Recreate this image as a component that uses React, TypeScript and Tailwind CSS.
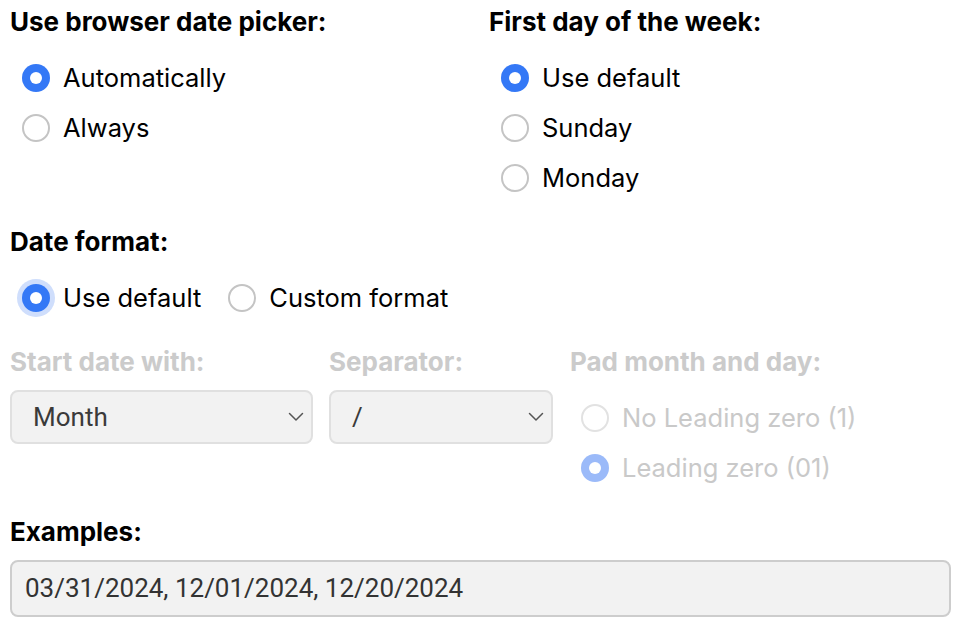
import { useState } from "react";

type RadioProps = {
  label: string;
  checked: boolean;
  disabled?: boolean;
  focused?: boolean;
  onChange?: () => void;
};

function Radio({ label, checked, disabled, focused, onChange }: RadioProps) {
  // kleurtjes zoals de macOS radio
  let circle = "border-2 border-[#c4c4c4] bg-white";
  if (checked && !disabled) circle = "bg-[#3478f6]";
  if (checked && disabled) circle = "bg-[#9bbaf9]";
  if (!checked && disabled) circle = "border-2 border-[#e2e2e2] bg-white";

  return (
    <label
      className={`flex h-[50px] items-center gap-[13px] ${disabled ? "text-[#c9c9c9]" : "text-black cursor-pointer"}`}
      onClick={() => !disabled && onChange?.()}
    >
      <span
        className={`flex h-[28px] w-[28px] shrink-0 items-center justify-center rounded-full ${circle} ${focused ? "ring-[5px] ring-[#cfdefc]" : ""}`}
      >
        {checked && <span className="h-[12px] w-[12px] rounded-full bg-white" />}
      </span>
      <span className="text-[25.5px] leading-none">{label}</span>
    </label>
  );
}

function Chevron() {
  return (
    <svg width="16" height="10" viewBox="0 0 16 10" fill="none" className="shrink-0">
      <path d="M1.5 1.5 L8 8 L14.5 1.5" stroke="#555" strokeWidth="1.5" strokeLinecap="round" strokeLinejoin="round" />
    </svg>
  );
}

function FakeSelect({ value, width }: { value: string; width: string }) {
  return (
    <div
      className={`${width} flex h-[54px] items-center justify-between rounded-[8px] border-2 border-[#e0e0e0] bg-[#f2f2f2] pl-[21px] pr-[7px] text-[26px] text-[#3a3a3a]`}
      style={{ fontFamily: "Roboto, sans-serif" }}
    >
      <span>{value}</span>
      <Chevron />
    </div>
  );
}

const heading = "h-[44px] text-[26px] font-bold leading-[44px]";

export default function App() {
  const [picker, setPicker] = useState("auto");
  const [firstDay, setFirstDay] = useState("default");
  const [fmt, setFmt] = useState("default");

  return (
    <div className="w-[962px] h-[629px] bg-white pl-[10px] pr-[11px] overflow-hidden" style={{ fontFamily: "Inter, 'Noto Sans', sans-serif" }}>
      <div className="flex">
        <div className="w-[479px]">
          <h2 className={`${heading} text-black`}>Use browser date picker:</h2>
          <div className="mt-[9px] pl-[12px]">
            <Radio label="Automatically" checked={picker === "auto"} onChange={() => setPicker("auto")} />
            <Radio label="Always" checked={picker === "always"} onChange={() => setPicker("always")} />
          </div>
        </div>
        <div>
          <h2 className={`${heading} text-black`}>First day of the week:</h2>
          <div className="mt-[9px] pl-[12px]">
            <Radio label="Use default" checked={firstDay === "default"} onChange={() => setFirstDay("default")} />
            <Radio label="Sunday" checked={firstDay === "sun"} onChange={() => setFirstDay("sun")} />
            <Radio label="Monday" checked={firstDay === "mon"} onChange={() => setFirstDay("mon")} />
          </div>
        </div>
      </div>

      <h2 className={`mt-[17px] ${heading} text-black`}>Date format:</h2>
      <div className="mt-[9px] flex gap-[27px] pl-[12px]">
        <Radio label="Use default" checked={fmt === "default"} focused onChange={() => setFmt("default")} />
        <Radio label="Custom format" checked={fmt === "custom"} onChange={() => setFmt("custom")} />
      </div>

      <div className="mt-[17px] flex">
        <div className="w-[319px]">
          <div className={`${heading} text-[#cbcbcb]`}>Start date with:</div>
          <div className="mt-[6px]">
            <FakeSelect value="Month" width="w-[303px]" />
          </div>
        </div>
        <div className="w-[241px]">
          <div className={`${heading} text-[#cbcbcb]`}>Separator:</div>
          <div className="mt-[6px]">
            <FakeSelect value="/" width="w-[224px]" />
          </div>
        </div>
        <div>
          <div className={`${heading} text-[#cbcbcb]`}>Pad month and day:</div>
          <div className="mt-[9px] pl-[11px]">
            <Radio label="No Leading zero (1)" checked={false} disabled />
            <Radio label="Leading zero (01)" checked disabled />
          </div>
        </div>
      </div>

      <div className={`mt-[17px] ${heading} text-black`}>Examples:</div>
      <div
        className="mt-[6px] flex h-[57px] w-[941px] items-center rounded-[8px] border-2 border-[#cdcdcd] bg-[#f2f2f2] pl-[13px] text-[26px] text-[#333]"
        style={{ fontFamily: "Roboto, sans-serif" }}
      >
        03/31/2024, 12/01/2024, 12/20/2024
      </div>
    </div>
  );
}
